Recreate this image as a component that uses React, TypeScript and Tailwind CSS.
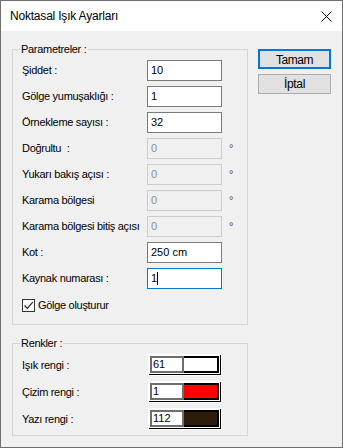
/**
 * Noktasal Işık Ayarları dialog
 * Classic Win32 style settings window, two group boxes and OK / Cancel.
 */

interface FieldRow {
  label: string;
  value: string;
  disabled?: boolean;
  focused?: boolean;
}

const rows: FieldRow[] = [
  { label: 'Şiddet :', value: '10' },
  { label: 'Gölge yumuşaklığı :', value: '1' },
  { label: 'Örnekleme sayısı :', value: '32' },
  { label: 'Doğrultu  :', value: '0', disabled: true },
  { label: 'Yukarı bakış açısı :', value: '0', disabled: true },
  { label: 'Karama bölgesi', value: '0', disabled: true },
  { label: 'Karama bölgesi bitiş açısı', value: '0', disabled: true },
  { label: 'Kot :', value: '250 cm' },
  { label: 'Kaynak numarası :', value: '1', focused: true },
];

const colours = [
  { label: 'Işık rengi :', index: '61', swatch: 'bg-white' },
  { label: 'Çizim rengi :', index: '1', swatch: 'bg-[#ff0000]' },
  { label: 'Yazı rengi :', index: '112', swatch: 'bg-[#2e1c0a]' },
];

function Field({ label, value, disabled, focused }: FieldRow) {
  const box = disabled
    ? 'border-[#cccccc] bg-[#f0f0f0] text-[#8c8c8c]'
    : focused
      ? 'border-[#0078d7] bg-white text-black'
      : 'border-[#7a7a7a] bg-white text-black';

  return (
    <div className="flex h-[21px] items-center">
      <span className="w-[125px] whitespace-pre">{label}</span>
      <div className={`flex h-[21px] w-[75px] items-center border pl-[3px] tracking-normal ${box}`}>
        {value}
        {focused && <span className="h-[13px] w-px bg-black" />}
      </div>
      {disabled && <span className="ml-[7px] text-[#4a4a4a]">°</span>}
    </div>
  );
}

function ColourPicker({ index, swatch }: { index: string; swatch: string }) {
  return (
    <div className="h-[22px] w-[74px] border border-white">
      <div className="flex h-full border-r border-b border-black bg-white p-px">
        <div className="flex w-[34px] items-center border-2 border-[#6e6e6e] pl-px leading-none tracking-normal">
          {index}
        </div>
        <div className={`flex-1 border-y-2 border-r-2 border-black ${swatch}`} />
      </div>
    </div>
  );
}

export default function App() {
  return (
    <div className="flex h-[448px] w-[343px] flex-col border border-[#6f6f6f] bg-[#f0f0f0] font-['Liberation_Sans',Arial,sans-serif] text-[11px] tracking-[-0.3px] text-black">
      {/* Title bar */}
      <div className="flex h-[30px] items-center justify-between bg-white pl-[9px] pr-[9px]">
        <span className="text-[12px] tracking-[-0.2px]">Noktasal Işık Ayarları</span>
        <svg width="11" height="11" viewBox="0 0 11 11" className="mr-[1px]">
          <path d="M0.5 0.5 L10.5 10.5 M10.5 0.5 L0.5 10.5" stroke="#000" strokeWidth="1" />
        </svg>
      </div>

      {/* Client area */}
      <div className="flex flex-1 gap-[10px] pl-[11px] pt-[12px]">
        <div className="flex w-[236px] flex-col gap-[12px]">
          <fieldset className="border border-[#d5d5d5] pb-[12px] pl-[9px]">
            <legend className="-ml-[2px] px-px leading-[13px]">Parametreler :</legend>
            <div className="flex flex-col gap-[5px] pt-[4px]">
              {rows.map((row) => (
                <Field key={row.label} {...row} />
              ))}
              <label className="mt-[4px] flex h-[14px] items-center gap-[3px]">
                <span className="flex h-[13px] w-[13px] items-center justify-center border border-[#333333] bg-white">
                  <svg width="11" height="11" viewBox="0 0 11 11">
                    <path d="M1.5 5.5 L4.3 8.3 L9.8 2.2" fill="none" stroke="#222" strokeWidth="1.2" />
                  </svg>
                </span>
                Gölge oluşturur
              </label>
            </div>
          </fieldset>

          <fieldset className="border border-[#d5d5d5] pb-[5px] pl-[9px]">
            <legend className="-ml-[2px] px-px leading-[13px]">Renkler :</legend>
            <div className="flex flex-col gap-[5px] pt-[4px]">
              {colours.map((c) => (
                <div key={c.label} className="flex h-[22px] items-center">
                  <span className="w-[126px]">{c.label}</span>
                  <ColourPicker index={c.index} swatch={c.swatch} />
                </div>
              ))}
            </div>
          </fieldset>
        </div>

        {/* Buttons */}
        <div className="flex w-[73px] flex-col gap-[5px] pt-[6px]">
          <button className="h-[20px] border-2 border-[#0078d7] bg-[#e1e1e1] text-[12px] tracking-[-0.5px]">Tamam</button>
          <button className="h-[20px] border border-[#adadad] bg-[#e1e1e1] text-[12px] tracking-[-0.3px]">İptal</button>
        </div>
      </div>
    </div>
  );
}
